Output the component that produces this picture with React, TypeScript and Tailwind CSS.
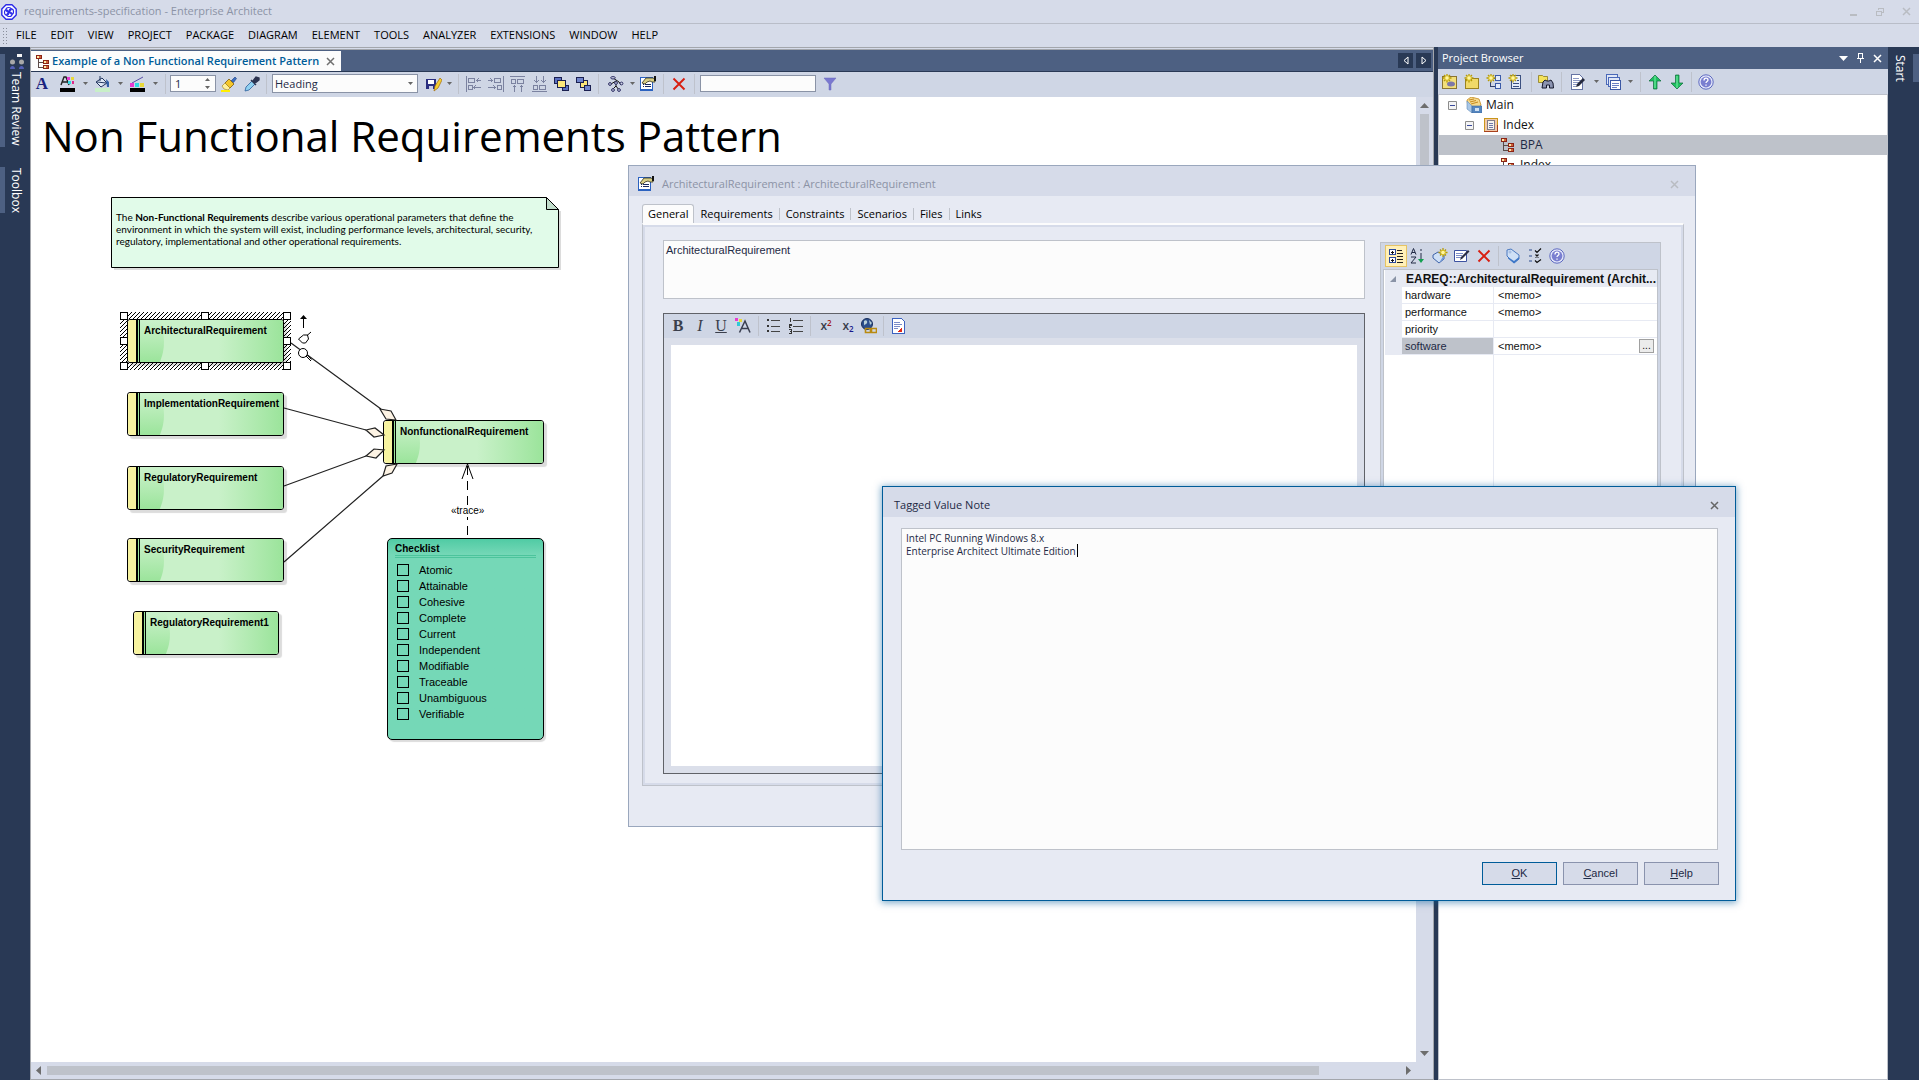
import type { ReactNode } from 'react'

interface IconProps {
  children: ReactNode
  smooth?: boolean
}

function Icon({ children, smooth = false }: IconProps) {
  return (
    <svg
      width="16"
      height="16"
      viewBox="0 0 16 16"
      className="shrink-0"
      shapeRendering={smooth ? 'auto' : 'crispEdges'}
      aria-hidden="true"
    >
      {children}
    </svg>
  )
}

/* ---------- icons ---------- */

const LogoIcon = () => (
  <Icon smooth>
    <path d="M5 .8h6L15.200 5v6L11 15.200H5L.8 11V5z" fill="#fff" stroke="#2a2ae8" strokeWidth="1.400" strokeLinejoin="round" />
    <g fill="none" stroke="#2a2ae8" strokeWidth="1.200">
      <path d="M8 8C4 8 4 3.500 7.500 3.500S11 6 8 8z" />
      <path d="M8 8c0-4 4.500-4 4.500-.5S10 11 8 8z" />
      <path d="M8 8c4 0 4 4.500.5 4.500S5 10 8 8z" />
      <path d="M8 8c0 4-4.500 4-4.500.5S6 5 8 8z" />
    </g>
  </Icon>
)

const DiagramIcon = () => (
  <Icon>
    <path d="M3.500 5v8.500H8M3.500 8.500H8" stroke="#5a4a48" fill="none" />
    <path d="M1 1h6v4H1zM8 6h6v4H8zM8 11h6v4H8z" fill="#8c2415" />
    <path d="M2 2h2v2H2zM9 7h2v2H9zM9 12h2v2H9z" fill="#fbe9a8" />
    <path d="M4 2h2v2H4zM11 7h2v2h-2zM11 12h2v2h-2z" fill="#d0603a" />
  </Icon>
)

const FontColorIcon = () => (
  <Icon>
    <path d="M1 9l3-8h2l3 8M2.500 6h5" stroke="#222" fill="none" strokeWidth="1.400" shapeRendering="auto" />
    <path d="M7 1h3v3H7z" fill="#e83ad0" />
    <path d="M11 1h3v3h-3z" fill="#e8d83a" />
    <path d="M8 5h3v3H8z" fill="#30d8e0" />
    <path d="M12 5h2v3h-2z" fill="#e02a8a" />
    <path d="M0 12h15v4H0z" fill="#000" />
  </Icon>
)

const BucketIcon = () => (
  <Icon>
    <g shapeRendering="auto">
      <path d="M1 6l6-4 5 5-6 4z" fill="#dfe8f6" stroke="#23365f" />
      <path d="M5 0v5M2 6l9 1" stroke="#23365f" />
      <path d="M11 3l3 3v5h-2z" fill="#3360a8" />
    </g>
    <path d="M0 12h15v4H0z" fill="#c8efc8" />
  </Icon>
)

const LineColorIcon = () => (
  <Icon>
    <path d="M2 7l11-6" stroke="#5a4fa8" shapeRendering="auto" />
    <path d="M0 7h4v4H0z" fill="#e83ad0" />
    <path d="M5 7h4v4H5z" fill="#30d8e0" />
    <path d="M10 7h4v4h-4z" fill="#e8d83a" />
    <path d="M0 12h15v4H0z" fill="#000" />
  </Icon>
)

const BrushIcon = () => (
  <Icon smooth>
    <path d="M10 5l4-4 1.500 1.500-3 4z" fill="#3c6fc0" stroke="#1f3f7f" strokeWidth=".6" />
    <path d="M4 7l4-4 5 5-4 4z" fill="#f4c62a" stroke="#7c5a10" strokeWidth=".8" />
    <path d="M1 10l3-3 5 5-2 2-4-1z" fill="#fff09a" stroke="#a07a10" strokeWidth=".6" />
    <path d="M0 15h9" stroke="#ffee00" strokeWidth="2" />
  </Icon>
)

const DropperIcon = () => (
  <Icon smooth>
    <path d="M1 15l1-4 6-6 3 3-6 6z" fill="#8fd0f0" stroke="#2c5f9c" strokeWidth=".8" />
    <path d="M7 4l5 5M9 5l3-4 3 1v2l-4 3z" fill="#2c3350" stroke="#2c3350" strokeWidth="1.400" />
  </Icon>
)

const SavePencilIcon = () => (
  <Icon>
    <path d="M0 3h10v10H0z" fill="#2b2f80" />
    <path d="M2 4h6v4H2z" fill="#fff" />
    <path d="M3 10h4v3H3z" fill="#c8cce8" />
    <path d="M8 15l1-5 5-8 2 2-4 8z" fill="#f6cf2f" stroke="#a06a10" strokeWidth=".7" shapeRendering="auto" />
  </Icon>
)

const AlignLeftIcon = () => (
  <Icon>
    <g fill="none" stroke="#7b82a0">
      <path d="M.5 0v16M15 4.500h-4M15 11.500H8M12.500 2.500l-2 2 2 2M9.500 9.500l-2 2 2 2" />
      <path d="M2.500 2.500h6v4h-6zM2.500 9.500h4v4h-4z" />
    </g>
  </Icon>
)

const AlignRightIcon = () => (
  <Icon>
    <g fill="none" stroke="#7b82a0">
      <path d="M15.500 0v16M0 4.500h4M0 11.500h7M2.500 2.500l2 2-2 2M5.500 9.500l2 2-2 2" />
      <path d="M6.500 2.500h6v4h-6zM9.500 9.500h4v4h-4z" />
    </g>
  </Icon>
)

const AlignTopIcon = () => (
  <Icon>
    <g fill="none" stroke="#7b82a0">
      <path d="M0 .5h15M4.500 16V9M11.500 16V9M2.500 11.500l2-2 2 2M9.500 11.500l2-2 2 2" />
      <path d="M1.500 3.500h4v4h-4zM7.500 3.500h6v4h-6z" />
    </g>
  </Icon>
)

const AlignBottomIcon = () => (
  <Icon>
    <g fill="none" stroke="#7b82a0">
      <path d="M0 15.500h15M4.500 0v6M11.500 0v6M2.500 4.500l2 2 2-2M9.500 4.500l2 2 2-2" />
      <path d="M1.500 9.500h4v4h-4zM7.500 9.500h6v4h-6z" />
    </g>
  </Icon>
)

const BringFrontIcon = () => (
  <Icon>
    <path d="M.5 1.500h7v6h-7zM8.500 9.500h6v5h-6z" fill="#5a6fc0" stroke="#1a1f50" />
    <path d="M3.500 4.500h8v7h-8z" fill="#fbe67a" stroke="#1a1f50" />
  </Icon>
)

const SendBackIcon = () => (
  <Icon>
    <path d="M4.500 4.500h7v7h-7z" fill="#fbe67a" stroke="#1a1f50" />
    <path d="M.5 1.500h7v5h-7zM8.500 9.500h6v5h-6z" fill="#6f84cc" stroke="#1a1f50" />
  </Icon>
)

const LayoutTreeIcon = () => (
  <Icon smooth>
    <path d="M5 2l6 4M8 5l-5 3M8 5v5M11 6l2 3M8 10l-4 4M8 10l3 4" stroke="#111" fill="none" />
    <g fill="#cfd6e8" stroke="#2a2a60">
      <ellipse cx="5" cy="1.800" rx="2.300" ry="1.200" />
      <circle cx="2" cy="8" r="1.400" />
      <circle cx="8" cy="7" r="1.400" />
      <circle cx="13.500" cy="7.500" r="1.400" />
      <circle cx="5" cy="14" r="1.400" />
      <circle cx="11" cy="14" r="1.400" />
    </g>
  </Icon>
)

const PropertiesIcon = () => (
  <Icon>
    <path d="M.5 1.500h12v13H.5z" fill="#fff" stroke="#2b62c0" />
    <path d="M1 13h11v2H1z" fill="#2b62c0" />
    <path d="M3 8.500h1M5 8.500h6M3 10.500h1M5 10.500h6" stroke="#1a2a60" />
    <path d="M2 7l4-5h7l2 1v3h-3l-2-1-3 1-2 2z" fill="#d8cf86" stroke="#33301a" strokeWidth=".8" shapeRendering="auto" />
    <path d="M14 0h2v5h-2z" fill="#111" />
  </Icon>
)

const DeleteIcon = () => (
  <Icon smooth>
    <path d="M2.500 2.500l11 11M13.500 2.500l-11 11" stroke="#d81e10" strokeWidth="1.900" />
  </Icon>
)

const FunnelIcon = () => (
  <Icon smooth>
    <path d="M2 2h12L9 8v6H7V8z" fill="#7a78d0" stroke="#6a68bc" strokeWidth=".5" />
  </Icon>
)

const Sparkle = ({ x, y }: { x: number; y: number }) => (
  <g transform={`translate(${x} ${y})`} shapeRendering="auto">
    <path d="M0-4.500v9M-4.500 0h9M-3-3l6 6M3-3l-6 6" stroke="#b59a08" strokeWidth="1.300" />
    <circle r="2.300" fill="#fff6a0" stroke="#d8bd20" />
  </g>
)

const NewModelIcon = () => (
  <Icon>
    <path d="M.5 2.500h14v12H.5z" fill="#f2df7a" stroke="#8b7430" />
    <ellipse cx="9" cy="10" rx="4" ry="2.500" fill="#7d78a8" shapeRendering="auto" />
    <Sparkle x={5} y={4} />
  </Icon>
)

const NewFolderIcon = () => (
  <Icon>
    <path d="M1.500 5.500h6l1-1h6v10h-13z" fill="#f0d968" stroke="#9a8220" />
    <Sparkle x={5} y={4} />
  </Icon>
)

const NewDiagramIcon = () => (
  <Icon>
    <path d="M4.500 8v4.500H9M9 4.500H7" stroke="#31406c" fill="none" />
    <path d="M9.500 1.500h5v5h-5zM9.500 9.500h5v5h-5z" fill="#e3ebfa" stroke="#3b5ba8" />
    <Sparkle x={5} y={4} />
  </Icon>
)

const NewElementIcon = () => (
  <Icon>
    <path d="M3.500 1.500h9v13h-9z" fill="#e3ebfa" stroke="#3b5080" />
    <path d="M5 9.500h6M5 12.500h6M9 6.500h2" stroke="#3b5080" />
    <Sparkle x={5} y={4} />
  </Icon>
)

const FindIcon = () => (
  <Icon smooth>
    <path d="M.5 1.500h4l1 1h4v6h-9z" fill="#f4e25a" stroke="#8a7a20" strokeWidth=".8" />
    <path d="M4 14l1-6 2-2 2 1h2l2-1 2 3 .5 5h-4v-3h-3v3z" fill="#8b93b0" stroke="#15182c" />
  </Icon>
)

const NotesIcon = () => (
  <Icon>
    <path d="M1.500.5h8l3 3v12h-11z" fill="#fff" stroke="#6674a4" />
    <path d="M3 4.500h6M3 6.500h8M3 8.500h6M3 10.500h4M3 12.500h3" stroke="#8c98c4" />
    <path d="M6 13l1-3 6-6 2 2-6 6z" fill="#25293d" shapeRendering="auto" />
  </Icon>
)

const WindowsIcon = () => (
  <Icon>
    <path d="M.5.5h11v10H.5z" fill="#dfe6f6" stroke="#4a68b8" />
    <path d="M2.500 3.500h11v9h-11z" fill="#dfe6f6" stroke="#4a68b8" />
    <path d="M4.500 6.500h10v9h-10z" fill="#fff" stroke="#3c58a4" />
    <path d="M6 9.500h7M6 11.500h7M6 13.500h5" stroke="#6a80c4" />
  </Icon>
)

const UpIcon = () => (
  <Icon smooth>
    <path d="M8 1l6 6h-4v8H6.500V7H2z" fill="#1fbf60" stroke="#0d6a3a" strokeWidth=".7" />
    <path d="M8 2v12" stroke="#7af0a8" />
  </Icon>
)

const DownIcon = () => (
  <Icon smooth>
    <path d="M8 15l6-6h-4V1H6.500v8H2z" fill="#1fbf60" stroke="#0d6a3a" strokeWidth=".7" />
    <path d="M8 2v12" stroke="#7af0a8" />
  </Icon>
)

const HelpIcon = () => (
  <Icon smooth>
    <circle cx="8" cy="8" r="7.200" fill="#e6e9fa" stroke="#5c68c0" />
    <circle cx="8" cy="8" r="5.400" fill="#7a7fd0" />
    <path d="M6 6.500c0-3 4-3 4-.5 0 1.500-2 1.500-2 3M8 10.500v1.200" stroke="#fff" strokeWidth="1.300" fill="none" />
  </Icon>
)

const CabinetIcon = () => (
  <Icon smooth>
    <path d="M1 3l4-3 8 2 2 6-3 3H2z" fill="#f6d98a" stroke="#c58a20" strokeWidth=".8" />
    <path d="M3 3l5-1M4 5l6-1.500M5 7l7-2" stroke="#c58a20" fill="none" />
    <path d="M1 4l5 5v7l-5-4z" fill="#a9c7e6" stroke="#5f8abb" strokeWidth=".6" />
    <path d="M6 9h10v7H6z" fill="#5586bf" stroke="#3e6aa0" strokeWidth=".6" />
    <path d="M9 11h4v3H9z" fill="#cfe0f2" />
  </Icon>
)

const PackageViewIcon = () => (
  <Icon>
    <path d="M1.500 1.500h13v13h-13z" fill="#f3c9a8" stroke="#c9961a" />
    <path d="M1 14.500h13.500V8" stroke="#a8401c" fill="none" />
    <path d="M4.500 3.500h7v9h-7z" fill="#f6f3ee" stroke="#807c88" />
    <path d="M6 6.500h4M6 8.500h4M6 10.500h4" stroke="#6d78a8" />
  </Icon>
)

const TeamIcon = () => (
  <Icon smooth>
    <path d="M8 0h5v3H8z" fill="#f4f4f4" />
    <circle cx="3.500" cy="8" r="2.500" fill="#a8a8a8" />
    <circle cx="12.500" cy="8" r="2.500" fill="#a8a8a8" />
    <path d="M1 15c0-4 5-4 5 0zM10 15c0-4 5-4 5 0z" fill="#5560b8" />
  </Icon>
)

const TextColorIcon = () => (
  <Icon smooth>
    <path d="M4.500 14.500L10 3l5 11.500M7 10.500h6" stroke="#3a3f50" strokeWidth="1.500" fill="none" />
    <path d="M0 0h3v3H0z" fill="#e83ad0" />
    <path d="M4 1h3v3H4z" fill="#e8d83a" />
    <path d="M2 4h3v4H2z" fill="#30c8d8" />
  </Icon>
)

const BulletsIcon = () => (
  <Icon>
    <path d="M1 1h2v2H1zM1 7h2v2H1zM1 12h2v2H1z" fill="#333" />
    <path d="M5 2.500h9M5 8.500h9M5 13.500h9" stroke="#444" />
  </Icon>
)

const NumbersIcon = () => (
  <Icon>
    <path d="M2.500 0v4M1 6.500h2v1H1.500v1.500H3M1 11.500h2v4H1M1.500 13.500H3" stroke="#333" fill="none" />
    <path d="M5 2.500h10M5 8.500h10M5 13.500h10" stroke="#444" />
  </Icon>
)

const LinkIcon = () => (
  <Icon smooth>
    <circle cx="6" cy="6" r="5.500" fill="#2c4f8c" stroke="#1a2f5c" />
    <path d="M3 3c2-2 4 0 3 2s-3 1-3 3M8 2l3 3-2 2z" fill="#b8d0d8" />
    <path d="M4.500 10.500h6v4h-6zM9.500 10.500h6v4h-6z" fill="none" stroke="#b98a10" strokeWidth="1.600" />
  </Icon>
)

const DocIcon = () => (
  <Icon>
    <path d="M1.500.5h9l3 3v12h-12z" fill="#fff" stroke="#3c62c0" />
    <path d="M3 4.500h6M3 6.500h8M3 8.500h6M3 10.500h4" stroke="#7a8cc8" />
    <path d="M11 10v4H6z" fill="#e02818" />
  </Icon>
)

const CategoryIcon = () => (
  <Icon>
    <path d="M1.500 1.500h6v5h-6zM1.500 9.500h6v5h-6z" fill="#fff" stroke="#2b4a9c" />
    <path d="M3 4h3M4.500 2.500v3M3 12h3M4.500 10.500v3" stroke="#111" />
    <path d="M9 2.500h5M9 5.500h6M9 8.500h6M9 11.500h6M9 14.500h6" stroke="#222" />
  </Icon>
)

const SortIcon = () => (
  <Icon smooth>
    <path d="M1 6.500L3.500.5 6 6.500M2 4.500h3M1 9h5l-5 6h5" stroke="#222a44" fill="none" />
    <path d="M11 1v2M11 5v8" stroke="#222a44" />
    <path d="M8 11h6l-3 4z" fill="#12a050" />
  </Icon>
)

const NewTagIcon = () => (
  <Icon smooth>
    <path d="M1 7l5-3 6 3v4l-5 4-6-5z" fill="#cfe0f6" stroke="#3d62a8" />
    <path d="M7 15l5-4V7z" fill="#6f95d4" />
    <Sparkle x={11} y={4.500} />
  </Icon>
)

const EditIcon = () => (
  <Icon smooth>
    <path d="M.5 2.500h12v11H.5z" fill="#fff" stroke="#3c52a0" />
    <path d="M2 5.500h7M2 7.500h6M2 9.500h5" stroke="#7a8cc8" />
    <path d="M6 12l1-3 7-7 1.500 1.500-7 7z" fill="#2a2e44" />
  </Icon>
)

const TagIcon = () => (
  <Icon smooth>
    <path d="M2 2l4-1 8 6v4l-5 4-7-7z" fill="#cfe0f6" stroke="#4a78c0" />
    <path d="M3 9l6 4 5-4v2l-5 4.500-6-5z" fill="#3f78c8" />
    <circle cx="5" cy="4" r="1" fill="#fff" stroke="#4a78c0" strokeWidth=".5" />
  </Icon>
)

const ChecksIcon = () => (
  <Icon smooth>
    <path d="M2 2h4M2 8h4M2 13h4" stroke="#7d90b8" strokeWidth="2" strokeDasharray="3 1" />
    <path d="M8 2.500l2 2 4-4M8.500 6.500l3 3M11.500 6.500l-3 3M8 12.500l2 2 4-3" stroke="#111" strokeWidth="1.200" fill="none" />
  </Icon>
)

/* ---------- small controls ---------- */

interface ToolButtonProps {
  label: string
  children: ReactNode
  className?: string
}

function ToolButton({ label, children, className = '' }: ToolButtonProps) {
  return (
    <button type="button" title={label} aria-label={label} className={`flex size-4 shrink-0 items-center justify-center ${className}`}>
      {children}
    </button>
  )
}

function DropArrow({ label, className = 'w-4' }: { label: string; className?: string }) {
  return (
    <button type="button" aria-label={label} className={`flex h-4 shrink-0 items-center justify-center ${className}`}>
      <svg width="5" height="3" aria-hidden="true"><path d="M0 0h5L2.500 3z" fill="#666" /></svg>
    </button>
  )
}

const Separator = ({ className = '' }: { className?: string }) => (
  <div className={`h-5 w-px shrink-0 bg-[#bec2cc] ${className}`} />
)

function CloseGlyph({ color }: { color: string }) {
  return (
    <svg width="9" height="9" aria-hidden="true">
      <path d="M1 1l7 7M8 1l-7 7" stroke={color} strokeWidth="1.500" />
    </svg>
  )
}

/* ---------- diagram ---------- */

const requirements = [
  { name: 'ArchitecturalRequirement', place: 'left-[96px] top-[222px] w-[157px]' },
  { name: 'ImplementationRequirement', place: 'left-[96px] top-[295px] w-[157px]' },
  { name: 'RegulatoryRequirement', place: 'left-[96px] top-[369px] w-[157px]' },
  { name: 'SecurityRequirement', place: 'left-[96px] top-[441px] w-[157px]' },
  { name: 'RegulatoryRequirement1', place: 'left-[102px] top-[514px] w-[146px]' },
  { name: 'NonfunctionalRequirement', place: 'left-[352px] top-[323px] w-[161px]' },
]

const checklist = [
  'Atomic', 'Attainable', 'Cohesive', 'Complete', 'Current',
  'Independent', 'Modifiable', 'Traceable', 'Unambiguous', 'Verifiable',
]

function RequirementNode({ name, place }: { name: string; place: string }) {
  return (
    <div className={`absolute flex h-11 overflow-hidden rounded-[3px] border border-black shadow-[3px_3px_1px_#dcdcdc] ${place}`}>
      <div className="w-[10px] shrink-0 rounded-l-[2px] border-r-2 border-black bg-[#f7f3a0]" />
      <div className="w-[2px] shrink-0 border-r border-black bg-[#9ce69c]" />
      <div className="relative min-w-0 flex-1 overflow-hidden bg-linear-to-r from-[#c9f1c9] from-55% to-[#9be49b]">
        <div className="absolute -top-7 -left-[76px] size-[100px] rounded-full bg-linear-to-b from-[#c9f1c9] from-30% to-[#9be49b] to-70%" />
        <div className="relative pt-[5px] pl-1 text-[10px] leading-3 font-bold whitespace-nowrap">{name}</div>
      </div>
    </div>
  )
}

const handles = [
  [120, 312], [201, 312], [283, 312],
  [120, 337], [283, 337],
  [120, 362], [201, 362], [283, 362],
]

function Connectors() {
  return (
    <svg className="absolute inset-0 size-full" aria-hidden="true">
      <defs>
        <pattern id="hatch" width="4" height="4" patternUnits="userSpaceOnUse">
          <path d="M0 3h1v1H0zM1 2h1v1H1zM2 1h1v1H2zM3 0h1v1H3z" fill="#000" />
        </pattern>
      </defs>
      <g transform="translate(-31 -97)">
        <path d="M120 312h171v58H120zM128 319v43h155v-43z" fill="url(#hatch)" fillRule="evenodd" shapeRendering="crispEdges" />
        <g fill="none" stroke="#222" strokeWidth="1.200">
          <path d="M291 343l90 66M284 408l82 22M284 486l82-30M284 562l99-86" />
        </g>
        <g fill="#fdf3e4" stroke="#222" strokeWidth="1.200">
          <path d="M380 409l11 2 5 9-10-1z" />
          <path d="M366 430l9-2 9 7-10 2z" />
          <path d="M366 456l8-7 10 1-8 8z" />
          <path d="M383 476l3-10 11-2-5 9z" />
        </g>
        <path d="M467.500 464v74" stroke="#000" strokeDasharray="9 6" strokeDashoffset="-2" />
        <path d="M462 479l5.500-15 5.500 15" fill="none" stroke="#000" />
        {handles.map(([x, y]) => (
          <rect key={`${x}-${y}`} x={x + 0.5} y={y + 0.5} width="7" height="7" fill="#fff" stroke="#000" />
        ))}
        <path d="M303.500 328v-11" stroke="#000" />
        <path d="M300 319l3.500-4 3.500 4z" />
        <g fill="#fff" stroke="#000">
          <path d="M298.500 339l5-4h4l1 4-3 4h-3zM307 335.500l4-3.500" />
          <circle cx="303" cy="353" r="4.500" />
          <path d="M306 356l5 5M307.500 355l4 4.500" />
        </g>
      </g>
    </svg>
  )
}

function DiagramCanvas() {
  return (
    <div className="relative min-w-0 flex-1 overflow-hidden bg-white font-['Liberation_Sans',sans-serif] text-black">
      <h1 className="pt-[15px] pl-[11px] font-['Open_Sans',sans-serif] text-[42px] leading-[48px] whitespace-nowrap">
        Non Functional Requirements Pattern
      </h1>

      <div className="absolute top-[100px] left-[80px] h-[71px] w-[448px]">
        <svg width="450" height="73" className="absolute inset-0" aria-hidden="true">
          <path d="M3 71h445V14h2v59H3z" fill="#dcdcdc" />
          <path d="M.5.5h435l12 12v58H.5z" fill="#e1fbe9" stroke="#000" />
          <path d="M435.500.5v12h12z" fill="#c1dccb" stroke="#000" />
        </svg>
        <p className="relative pt-[14px] pl-[5px] font-['Lato',sans-serif] text-[10px] leading-3 whitespace-nowrap">
          The <b>Non-Functional Requirements</b> describe various operational parameters that define the
          <br />
          environment in which the system will exist, including performance levels, architectural, security,
          <br />
          regulatory, implementational and other operational requirements.
        </p>
      </div>

      {requirements.map(r => <RequirementNode key={r.name} {...r} />)}

      <div className="absolute top-[441px] left-[356px] h-[202px] w-[157px] rounded-[5px] border border-black bg-linear-to-b from-[#4fcba4] to-[#75d8b7] to-8% px-[7px] shadow-[2px_2px_1px_#dcdcdc]">
        <div className="pt-1 text-[10px] leading-3 font-bold">Checklist</div>
        <div className="mb-1 h-[3px] border-y border-[#4cc49c]" />
        <ul className="pl-[2px] text-[11px] leading-4">
          {checklist.map(item => (
            <li key={item}>
              <label className="flex h-4 items-center gap-[10px]">
                <input type="checkbox" className="size-3 appearance-none border border-black" />
                {item}
              </label>
            </li>
          ))}
        </ul>
      </div>

      <Connectors />
      <span className="absolute top-[408px] left-[420px] bg-white text-[10px] leading-3">«trace»</span>
    </div>
  )
}

/* ---------- document window ---------- */

function DiagramToolbar() {
  return (
    <div className="flex h-[25px] shrink-0 items-center bg-[#cfd6e5] pb-[2px] pl-[3px] text-[#1e2a45]">
      <ToolButton label="Font">
        <span className="font-['Liberation_Serif',serif] text-[17px] leading-4 font-bold text-[#1a237e]">A</span>
      </ToolButton>
      <ToolButton label="Font color" className="ml-[10px]"><FontColorIcon /></ToolButton>
      <DropArrow label="Font color options" className="w-[18px]" />
      <ToolButton label="Fill color" className="ml-px"><BucketIcon /></ToolButton>
      <DropArrow label="Fill color options" className="w-[18px]" />
      <ToolButton label="Line color" className="ml-px"><LineColorIcon /></ToolButton>
      <DropArrow label="Line color options" className="w-[18px]" />
      <Separator className="ml-px" />
      <div className="ml-1 flex h-[17px] w-[46px] items-center border border-[#8a93a6] bg-[#fcfcfc]">
        <input aria-label="Line width" defaultValue="1" className="w-[33px] pl-1 text-[11px] leading-4 outline-none" />
        <svg width="7" height="11" aria-hidden="true"><path d="M1 3h5L3.500 0zM1 8h5l-2.500 3z" fill="#666" /></svg>
      </div>
      <ToolButton label="Apply style" className="ml-[5px]"><BrushIcon /></ToolButton>
      <ToolButton label="Pick style" className="ml-[7px]"><DropperIcon /></ToolButton>
      <Separator className="ml-[6px]" />
      <div className="relative ml-[5px] h-[19px] w-[146px]">
        <select aria-label="Style" className="block size-full appearance-none border border-[#8a93a6] bg-[#fcfcfc] pl-[2px] text-[11px] leading-4 outline-none">
          <option>Heading</option>
        </select>
        <svg width="5" height="3" className="pointer-events-none absolute top-2 right-[5px]" aria-hidden="true"><path d="M0 0h5L2.500 3z" fill="#666" /></svg>
      </div>
      <ToolButton label="Save style" className="ml-2"><SavePencilIcon /></ToolButton>
      <DropArrow label="Save style options" className="w-[15px]" />
      <Separator className="ml-px" />
      <div className="ml-[7px] flex gap-[6px]">
        <ToolButton label="Align left"><AlignLeftIcon /></ToolButton>
        <ToolButton label="Align right"><AlignRightIcon /></ToolButton>
        <ToolButton label="Align top"><AlignTopIcon /></ToolButton>
        <ToolButton label="Align bottom"><AlignBottomIcon /></ToolButton>
        <ToolButton label="Bring to front"><BringFrontIcon /></ToolButton>
        <ToolButton label="Send to back"><SendBackIcon /></ToolButton>
      </div>
      <Separator className="ml-[6px]" />
      <ToolButton label="Layout" className="ml-[9px]"><LayoutTreeIcon /></ToolButton>
      <DropArrow label="Layout options" />
      <ToolButton label="Properties"><PropertiesIcon /></ToolButton>
      <Separator className="ml-[7px]" />
      <ToolButton label="Delete" className="ml-[7px]"><DeleteIcon /></ToolButton>
      <Separator className="ml-[7px]" />
      <input aria-label="Filter" className="ml-[5px] h-[17px] w-[116px] border border-[#8a93a6] bg-[#fcfcfc] px-1 text-[11px] outline-none" />
      <ToolButton label="Apply filter" className="ml-[6px]"><FunnelIcon /></ToolButton>
    </div>
  )
}

function DocumentWindow() {
  return (
    <main className="flex min-w-0 flex-1 flex-col border-x border-b border-[#a3a6ac] bg-[#d6dbe9]">
      <div className="h-[3px] shrink-0 border-y border-[#a3a6ac]" />
      <div className="flex h-[22px] shrink-0 items-end border-b border-[#293955] bg-[#4d6082]">
        <div className="flex h-5 items-center bg-[#fcfcfc] pt-px pr-[6px] pl-1">
          <DiagramIcon />
          <span className="ml-[1px] w-[267px] text-[11px] font-semibold whitespace-nowrap text-[#005c99]">
            Example of a Non Functional Requirement Pattern
          </span>
          <button type="button" aria-label="Close tab" className="ml-[7px]"><CloseGlyph color="#707070" /></button>
        </div>
        <div className="mb-[3px] ml-auto flex gap-[3px] pr-[2px]">
          <button type="button" aria-label="Previous tab" className="flex size-[15px] items-center justify-center bg-[#293955]">
            <svg width="6" height="9" aria-hidden="true"><path d="M5 1v7L1 4.500z" fill="none" stroke="#fff" /></svg>
          </button>
          <button type="button" aria-label="Next tab" className="flex size-[15px] items-center justify-center bg-[#293955]">
            <svg width="6" height="9" aria-hidden="true"><path d="M1 1v7l4-3.500z" fill="none" stroke="#fff" /></svg>
          </button>
        </div>
      </div>

      <DiagramToolbar />

      <div className="flex min-h-0 flex-1">
        <DiagramCanvas />
        <div className="flex w-[17px] shrink-0 flex-col items-center justify-between py-[6px]">
          <svg width="9" height="5" aria-hidden="true"><path d="M0 5h9L4.500 0z" fill="#6d6d6d" /></svg>
          <div className="my-[6px] w-[9px] flex-1">
            <div className="h-3/5 bg-[#bec2ca]" />
          </div>
          <svg width="9" height="5" aria-hidden="true"><path d="M0 0h9L4.500 5z" fill="#6d6d6d" /></svg>
        </div>
      </div>
      <div className="flex h-[17px] shrink-0 items-center pr-[22px] pl-[5px]">
        <svg width="5" height="9" aria-hidden="true"><path d="M5 0v9L0 4.500z" fill="#6d6d6d" /></svg>
        <div className="mx-[6px] h-[9px] flex-1">
          <div className="h-full w-[94%] bg-[#bec2ca]" />
        </div>
        <svg width="5" height="9" aria-hidden="true"><path d="M0 0v9l5-4.500z" fill="#6d6d6d" /></svg>
      </div>
    </main>
  )
}

/* ---------- project browser ---------- */

const Expander = () => (
  <svg width="9" height="9" className="shrink-0" aria-hidden="true">
    <path d="M.5.5h8v8h-8z" fill="#f4f4f4" stroke="#8c8c8c" />
    <path d="M2 4.500h5" stroke="#3a4a9c" />
  </svg>
)

function ProjectBrowser() {
  return (
    <aside className="flex w-[450px] shrink-0 flex-col bg-white">
      <header className="flex h-[22px] shrink-0 items-center bg-[#4d6082] pr-[6px] pl-1 text-[11px] text-white">
        <h2 className="flex-1">Project Browser</h2>
        <button type="button" aria-label="Window menu">
          <svg width="9" height="5" aria-hidden="true"><path d="M0 0h9L4.500 5z" fill="#fff" /></svg>
        </button>
        <button type="button" aria-label="Pin" className="ml-[9px]">
          <svg width="8" height="10" shapeRendering="crispEdges" aria-hidden="true"><path d="M1.500 5V.5h4V5M0 5.500h7M3.500 6v4M5 0v5" fill="none" stroke="#fff" /></svg>
        </button>
        <button type="button" aria-label="Close Project Browser" className="ml-2"><CloseGlyph color="#fff" /></button>
      </header>
      <div className="flex h-[26px] shrink-0 items-center border-b border-[#bec2cc] bg-[#cfd6e5] pl-1">
        <div className="flex gap-[6px]">
          <ToolButton label="New model"><NewModelIcon /></ToolButton>
          <ToolButton label="New package"><NewFolderIcon /></ToolButton>
          <ToolButton label="New diagram"><NewDiagramIcon /></ToolButton>
          <ToolButton label="New element"><NewElementIcon /></ToolButton>
        </div>
        <Separator className="ml-[7px]" />
        <ToolButton label="Find" className="ml-[6px]"><FindIcon /></ToolButton>
        <Separator className="ml-[7px]" />
        <ToolButton label="Documentation" className="ml-2"><NotesIcon /></ToolButton>
        <DropArrow label="Documentation options" className="w-5" />
        <ToolButton label="Windows"><WindowsIcon /></ToolButton>
        <DropArrow label="Window options" />
        <Separator className="ml-[2px]" />
        <ToolButton label="Move up" className="ml-[6px]"><UpIcon /></ToolButton>
        <ToolButton label="Move down" className="ml-[6px]"><DownIcon /></ToolButton>
        <Separator className="ml-[6px]" />
        <ToolButton label="Help" className="ml-[6px]"><HelpIcon /></ToolButton>
      </div>
      <ul className="flex-1 border-x border-b border-[#bec2ca] text-[12px] text-[#111]">
        <li className="flex h-5 items-center pl-[9px]">
          <Expander />
          <span className="mr-1 ml-[9px]"><CabinetIcon /></span>Main
        </li>
        <li className="flex h-5 items-center pl-[26px]">
          <Expander />
          <span className="mr-1 ml-[9px]"><PackageViewIcon /></span>Index
        </li>
        <li className="flex h-5 items-center bg-[#bec2ca] pl-[61px] text-[#1e2a45]">
          <span className="mr-1"><DiagramIcon /></span>BPA
        </li>
        <li className="flex h-5 items-center pl-[61px]">
          <span className="mr-1"><DiagramIcon /></span>Index
        </li>
      </ul>
    </aside>
  )
}

/* ---------- dialogs ---------- */

const tabs = ['General', 'Requirements', 'Constraints', 'Scenarios', 'Files', 'Links']

const taggedValues = [
  { name: 'hardware', value: '<memo>' },
  { name: 'performance', value: '<memo>' },
  { name: 'priority', value: '' },
  { name: 'software', value: '<memo>' },
]

function TaggedValues() {
  return (
    <section className="flex w-[281px] shrink-0 flex-col border border-[#bec2ca] bg-[#cfd6e5] px-[2px] pb-[2px]">
      <div className="flex h-[26px] shrink-0 items-center pl-[2px]">
        <button type="button" aria-label="Categorized" className="flex size-[22px] shrink-0 items-center justify-center border border-[#e5c365] bg-[#fff0b8]">
          <CategoryIcon />
        </button>
        <ToolButton label="Sort" className="ml-[3px]"><SortIcon /></ToolButton>
        <ToolButton label="New tag" className="ml-[6px]"><NewTagIcon /></ToolButton>
        <ToolButton label="Edit note" className="ml-[6px]"><EditIcon /></ToolButton>
        <ToolButton label="Delete tag" className="ml-[6px]"><DeleteIcon /></ToolButton>
        <Separator className="ml-[6px]" />
        <ToolButton label="Default tags" className="ml-[6px]"><TagIcon /></ToolButton>
        <ToolButton label="Tag options" className="ml-[6px]"><ChecksIcon /></ToolButton>
        <ToolButton label="Tag help" className="ml-[6px]"><HelpIcon /></ToolButton>
      </div>
      <div className="flex flex-1 flex-col border border-[#bec2ca] bg-white pl-px font-['Liberation_Sans',sans-serif] text-[#111]">
        <table className="w-full table-fixed border-separate border-spacing-0 text-left text-[11px] leading-4">
          <colgroup>
            <col className="w-[17px]" />
            <col className="w-[92px]" />
            <col />
          </colgroup>
          <thead>
            <tr className="h-[17px] bg-[#e7eaf3]">
              <th className="p-0">
                <svg width="6" height="6" className="ml-[5px] block" aria-hidden="true"><path d="M6 0v6H0z" fill="#8a93a6" /></svg>
              </th>
              <th colSpan={2} className="p-0 pl-1 text-[12px] font-bold whitespace-nowrap">
                EAREQ::ArchitecturalRequirement (Archit...
              </th>
            </tr>
          </thead>
          <tbody>
            {taggedValues.map(tag => (
              <tr key={tag.name} className="h-[17px]">
                <td className="bg-[#e7eaf3] p-0" />
                <td className={`border-r border-b border-[#e7eaf3] p-0 pl-[3px] ${tag.name === 'software' ? 'bg-[#bec2ca] text-[#1e2a45]' : ''}`}>
                  {tag.name}
                </td>
                <td className="border-b border-[#e7eaf3] p-0 pr-[3px] pl-1">
                  <div className="flex h-4 items-center justify-between">
                    {tag.value}
                    {tag.name === 'software' && (
                      <button type="button" aria-label="Edit memo" className="h-[14px] w-[15px] border border-[#a0a0a0] bg-[#ececec] text-center text-[10px] leading-[10px]">
                        ...
                      </button>
                    )}
                  </div>
                </td>
              </tr>
            ))}
          </tbody>
        </table>
        <div className="ml-[108px] flex-1 border-l border-[#e7eaf3]" />
      </div>
    </section>
  )
}

function EditorToolbar() {
  return (
    <div className="flex h-6 shrink-0 items-center bg-[#cfd6e5] pl-[6px] font-['Liberation_Serif',serif] text-[16px] leading-4 text-[#3a3f4c]">
      <ToolButton label="Bold"><b>B</b></ToolButton>
      <ToolButton label="Italic" className="ml-[6px]"><i>I</i></ToolButton>
      <ToolButton label="Underline" className="ml-[5px]"><u>U</u></ToolButton>
      <ToolButton label="Text color" className="ml-[6px]"><TextColorIcon /></ToolButton>
      <Separator className="ml-[7px]" />
      <ToolButton label="Bullets" className="ml-[7px]"><BulletsIcon /></ToolButton>
      <ToolButton label="Numbering" className="ml-[6px]"><NumbersIcon /></ToolButton>
      <Separator className="ml-[6px]" />
      <ToolButton label="Superscript" className="ml-[7px]">
        <span className="font-['Open_Sans',sans-serif] text-[12px] font-semibold">x<sup className="text-[8px] text-[#a01818]">2</sup></span>
      </ToolButton>
      <ToolButton label="Subscript" className="ml-[6px]">
        <span className="font-['Open_Sans',sans-serif] text-[12px] font-semibold">x<sub className="text-[8px] text-[#18188c]">2</sub></span>
      </ToolButton>
      <ToolButton label="Hyperlink" className="ml-[5px]"><LinkIcon /></ToolButton>
      <Separator className="ml-[6px]" />
      <ToolButton label="New document" className="ml-[7px]"><DocIcon /></ToolButton>
    </div>
  )
}

function PropertiesDialog() {
  return (
    <div
      role="dialog"
      aria-labelledby="properties-title"
      className="absolute top-[165px] left-[628px] flex h-[662px] w-[1068px] flex-col border border-[#9aa7bd] bg-[#e7eaf3]"
    >
      <header className="flex h-[30px] shrink-0 items-center bg-[#d6dbe9] pt-[6px] pr-4 pl-[9px] text-[11px] text-[#8c93a6]">
        <PropertiesIcon />
        <h2 id="properties-title" className="ml-2 flex-1">ArchitecturalRequirement : ArchitecturalRequirement</h2>
        <button type="button" aria-label="Close properties"><CloseGlyph color="#b9bcc2" /></button>
      </header>

      <div role="tablist" className="mt-2 ml-[13px] flex h-[19px] shrink-0 items-center text-[11px] text-black">
        {tabs.map((tab, i) => (
          <button
            key={tab}
            type="button"
            role="tab"
            aria-selected={i === 0}
            className={
              i === 0
                ? 'h-full rounded-t-[3px] border-x border-t border-[#bec2ca] bg-[#fcfcfc] px-[5px]'
                : i === tabs.length - 1
                  ? 'h-3 px-[6px] leading-3'
                  : 'h-3 border-r border-[#bec2ca] px-[6px] leading-3'
            }
          >
            {tab}
          </button>
        ))}
      </div>

      <div className="mr-[11px] mb-[40px] ml-[13px] flex min-h-0 flex-1 border border-t-2 border-[#bec2ca] border-t-[#fcfcfc] shadow-[inset_0_0_0_2px_#d6dbe9]">
        <div className="mt-[15px] mr-[15px] mb-[11px] ml-5 flex min-w-0 flex-1 flex-col gap-[14px]">
          <textarea
            aria-label="Name"
            defaultValue="ArchitecturalRequirement"
            className="h-[59px] shrink-0 resize-none border border-[#bec2ca] bg-[#fcfcfc] px-[2px] pt-[3px] font-['Liberation_Sans',sans-serif] text-[11px] leading-[13px] text-[#1e2a45] outline-none"
          />
          <div className="flex flex-1 flex-col border border-[#606268] bg-[#dbdfea]">
            <EditorToolbar />
            <textarea aria-label="Notes" className="mx-[7px] mt-[7px] mb-[7px] flex-1 resize-none bg-white p-1 text-[11px] outline-none" />
          </div>
        </div>
        <div className="mt-[17px] mr-[22px] mb-[11px] flex">
          <TaggedValues />
        </div>
      </div>
    </div>
  )
}

function NoteDialog() {
  return (
    <div
      role="dialog"
      aria-labelledby="note-title"
      className="absolute top-[486px] left-[882px] flex h-[415px] w-[854px] flex-col border border-[#005c99] bg-[#e7eaf3] shadow-[0_1px_7px_1px_rgba(0,92,153,0.5)]"
    >
      <header className="flex h-[30px] shrink-0 items-center bg-[#d6dbe9] pt-[7px] pr-4 pl-[11px] text-[11px] text-[#1e2a45]">
        <h2 id="note-title" className="flex-1">Tagged Value Note</h2>
        <button type="button" aria-label="Close note"><CloseGlyph color="#666" /></button>
      </header>
      <div className="relative mt-[11px] mr-[17px] ml-[18px] flex flex-1">
        <textarea
          aria-labelledby="note-title"
          defaultValue={'Intel PC Running Windows 8.x\nEnterprise Architect Ultimate Edition'}
          className="flex-1 resize-none border border-[#bec2ca] bg-[#fcfcfc] px-1 pt-[3px] font-['Open_Sans',sans-serif] text-[10px] leading-[13px] text-[#1e2a45] outline-none"
        />
        {/* text cursor */}
        <div className="absolute top-[16px] left-[176px] h-[13px] w-px bg-black" />
      </div>
      <div className="flex shrink-0 justify-end gap-[6px] pt-3 pr-4 pb-[15px] font-['Liberation_Sans',sans-serif] text-[11px] text-[#1e2a45]">
        <button type="button" className="h-[23px] w-[75px] border border-[#005c99] bg-[#d6dbe9]"><u>O</u>K</button>
        <button type="button" className="h-[23px] w-[75px] border border-[#8a93ad] bg-[#d6dbe9]"><u>C</u>ancel</button>
        <button type="button" className="h-[23px] w-[75px] border border-[#8a93ad] bg-[#d6dbe9]"><u>H</u>elp</button>
      </div>
    </div>
  )
}

/* ---------- shell ---------- */

const menus = ['FILE', 'EDIT', 'VIEW', 'PROJECT', 'PACKAGE', 'DIAGRAM', 'ELEMENT', 'TOOLS', 'ANALYZER', 'EXTENSIONS', 'WINDOW', 'HELP']

export default function App() {
  return (
    <div className="relative flex h-screen flex-col overflow-hidden bg-[#d6dbe9] font-['Open_Sans',sans-serif]">
      <header className="flex h-6 shrink-0 items-center border-b border-[#b9bdc8] pr-2 pl-[1px] text-[11px] text-[#8c93a6]">
        <LogoIcon />
        <span className="ml-[7px] flex-1">requirements-specification - Enterprise Architect</span>
        <div className="flex items-center gap-[18px]">
          <button type="button" aria-label="Minimize">
            <svg width="7" height="9" aria-hidden="true"><path d="M0 7h7v2H0z" fill="#b9bcc2" /></svg>
          </button>
          <button type="button" aria-label="Restore">
            <svg width="9" height="9" shapeRendering="crispEdges" aria-hidden="true"><path d="M3 3V1h5v4H6M1 4h5v4H1z" fill="none" stroke="#b9bcc2" /></svg>
          </button>
          <button type="button" aria-label="Close"><CloseGlyph color="#b9bcc2" /></button>
        </div>
      </header>

      <nav className="flex h-[23px] shrink-0 items-center pl-[2px] text-[11px] text-black">
        <div className="h-[18px] w-[6px] bg-[radial-gradient(#8a8f9c_1px,transparent_1px)] bg-size-[3px_3px]" />
        <ul className="ml-2 flex gap-[14px]">
          {menus.map(menu => (
            <li key={menu}><button type="button">{menu}</button></li>
          ))}
        </ul>
      </nav>

      <div className="flex min-h-0 flex-1 bg-[#293955] text-white">
        <div className="flex w-[30px] shrink-0 flex-col gap-5 pt-[7px]">
          <button type="button" className="flex h-[93px] w-[25px] flex-col items-end gap-[2px] border-l-[5px] border-[#4d6082]">
            <TeamIcon />
            <span className="pr-px text-[12px] leading-4 whitespace-nowrap [writing-mode:vertical-rl]">Team Review</span>
          </button>
          <button type="button" className="flex h-[46px] w-[25px] items-center justify-end border-l-[5px] border-[#4d6082]">
            <span className="pr-px text-[12px] leading-4 whitespace-nowrap [writing-mode:vertical-rl]">Toolbox</span>
          </button>
        </div>
        <DocumentWindow />
        <div className="w-1 shrink-0" />
        <ProjectBrowser />
        <div className="flex w-[31px] shrink-0 flex-col items-end pt-[7px]">
          <button type="button" className="flex h-7 w-[27px] border-r-[6px] border-[#4d6082]">
            <span className="text-[12px] leading-4 whitespace-nowrap [writing-mode:vertical-rl]">Start</span>
          </button>
        </div>
      </div>

      <PropertiesDialog />
      <NoteDialog />
    </div>
  )
}
